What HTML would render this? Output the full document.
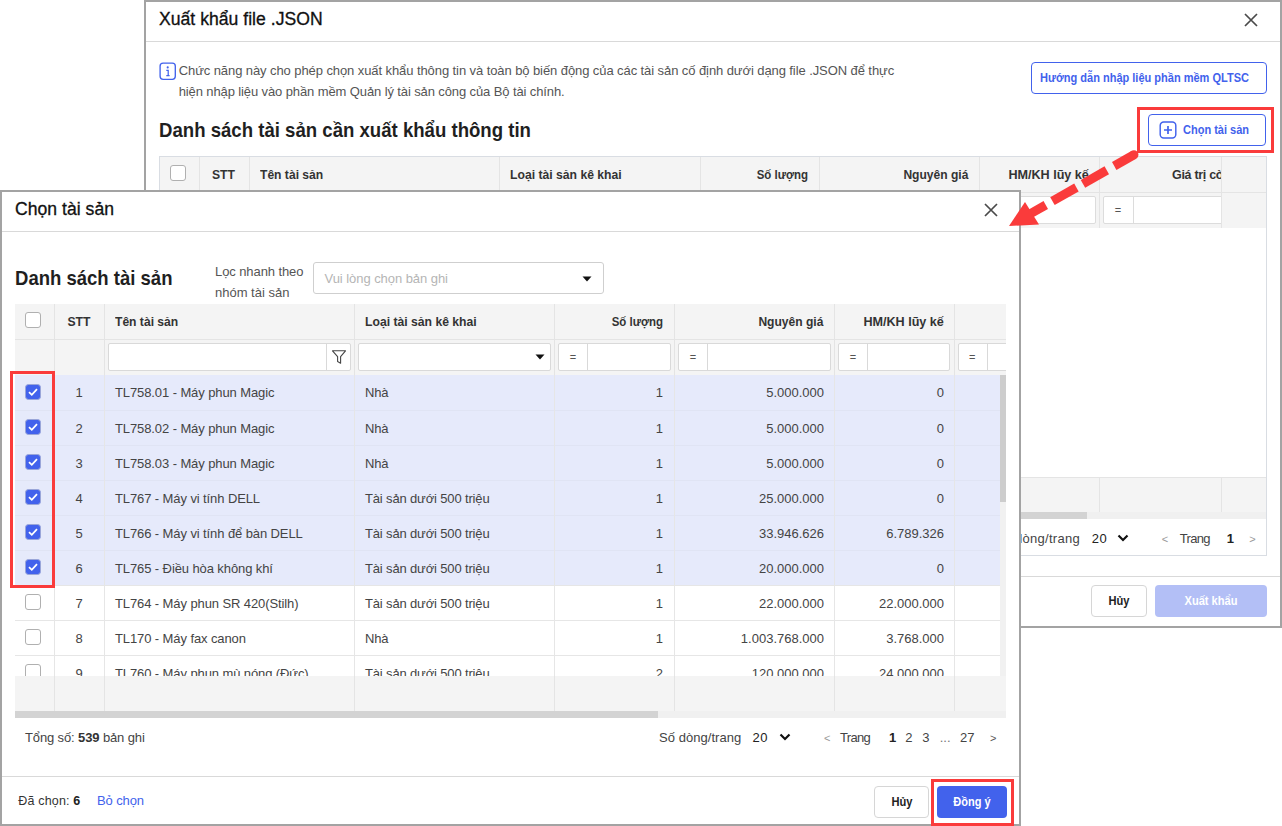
<!DOCTYPE html><html><head><meta charset="utf-8"><style>
html,body{margin:0;padding:0;background:#fff;}
body{width:1282px;height:826px;overflow:hidden;position:relative;font-family:"Liberation Sans",sans-serif;}
.b{position:absolute;}
.t{position:absolute;white-space:nowrap;line-height:20px;}
</style></head><body>
<div class='b' style='left:144px;top:0px;width:1138px;height:628px;box-sizing:border-box;border:2px solid #a3a3a3;background:#fff'></div>
<div class='t' style='letter-spacing:0.015px;left:159px;top:9px;font-size:17.6px;font-weight:400;color:#111;-webkit-text-stroke:0.3px #111;'>Xuất khẩu file .JSON</div>
<svg class='b' style='left:1244px;top:13px' width='14' height='14' viewBox='0 0 14 14'><path d='M1 1L13 13M13 1L1 13' stroke='#4a4a4a' stroke-width='1.7' fill='none'/></svg>
<div class='b' style='left:146px;top:41px;width:1134px;height:1px;background:#d9d9d9'></div>
<svg class='b' style='left:159px;top:62px' width='18' height='18' viewBox='0 0 18 18'><rect x='1.1' y='1.1' width='15.2' height='16.2' rx='3' fill='none' stroke='#4262ec' stroke-width='1.35'/><circle cx='8.7' cy='5.4' r='1.05' fill='#4262ec'/><path d='M7.3 8.3H9.2V13.6M7.3 13.6H10.6' stroke='#4262ec' stroke-width='1.25' fill='none'/></svg>
<div class='t' style='letter-spacing:-0.084px;left:178.7px;top:61px;font-size:13px;font-weight:400;color:#555;'>Chức năng này cho phép chọn xuất khẩu thông tin và toàn bộ biến động của các tài sản cố định dưới dạng file .JSON để thực</div>
<div class='t' style='letter-spacing:-0.110px;left:178.7px;top:82px;font-size:13px;font-weight:400;color:#555;'>hiện nhập liệu vào phần mềm Quản lý tài sản công của Bộ tài chính.</div>
<div class='b' style='left:1031px;top:62px;width:236px;height:32px;box-sizing:border-box;border:1px solid #4262ec;border-radius:4px'></div>
<div class='t' style='transform:scaleX(0.8812);transform-origin:left;left:1040px;top:68px;font-size:12.5px;font-weight:700;color:#4262ec;'>Hướng dẫn nhập liệu phần mềm QLTSC</div>
<div class='t' style='transform:scaleX(0.9071);transform-origin:left;left:159px;top:120px;font-size:20.5px;font-weight:700;color:#1f1f1f;'>Danh sách tài sản cần xuất khẩu thông tin</div>
<div class='b' style='left:1148px;top:114px;width:118px;height:32px;box-sizing:border-box;border:1px solid #4262ec;border-radius:4px'></div>
<svg class='b' style='left:1159px;top:121px' width='18' height='18' viewBox='0 0 18 18'><rect x='1.2' y='1' width='15.6' height='16' rx='3.5' fill='none' stroke='#4262ec' stroke-width='1.45'/><path d='M9 5V13M5 9H13' stroke='#4262ec' stroke-width='1.7'/></svg>
<div class='t' style='transform:scaleX(0.8798);transform-origin:left;left:1183px;top:120px;font-size:12.5px;font-weight:700;color:#4262ec;'>Chọn tài sản</div>
<div class='b' style='left:159px;top:156px;width:1108px;height:400px;box-sizing:border-box;border:1px solid #d9dde3;background:#fff'></div>
<div class='b' style='left:160px;top:157px;width:1106px;height:71px;background:#f4f4f4'></div>
<div class='b' style='left:160px;top:192px;width:1106px;height:1px;background:#e4e4e4'></div>
<div class='b' style='left:199px;top:157px;width:1px;height:71px;background:#e4e4e4'></div>
<div class='b' style='left:249px;top:157px;width:1px;height:71px;background:#e4e4e4'></div>
<div class='b' style='left:499px;top:157px;width:1px;height:71px;background:#e4e4e4'></div>
<div class='b' style='left:700px;top:157px;width:1px;height:71px;background:#e4e4e4'></div>
<div class='b' style='left:819px;top:157px;width:1px;height:71px;background:#e4e4e4'></div>
<div class='b' style='left:979px;top:157px;width:1px;height:71px;background:#e4e4e4'></div>
<div class='b' style='left:1099px;top:157px;width:1px;height:71px;background:#e4e4e4'></div>
<div class='b' style='left:1221px;top:157px;width:1px;height:71px;background:#e4e4e4'></div>
<div class='b' style='left:170px;top:165px;width:16px;height:16px;box-sizing:border-box;border:1px solid #b0b0b0;border-radius:3px;background:#fff'></div>
<div class='t' style='transform:scaleX(0.9742);transform-origin:left;left:212.4px;top:165px;font-size:12.5px;font-weight:700;color:#333;'>STT</div>
<div class='t' style='transform:scaleX(0.9679);transform-origin:left;left:260px;top:165px;font-size:12.5px;font-weight:700;color:#333;'>Tên tài sản</div>
<div class='t' style='transform:scaleX(0.9743);transform-origin:left;left:510px;top:165px;font-size:12.5px;font-weight:700;color:#333;'>Loại tài sản kê khai</div>
<div class='t' style='transform:scaleX(0.9173);transform-origin:right;right:474px;top:165px;font-size:12.5px;font-weight:700;color:#333;'>Số lượng</div>
<div class='t' style='transform:scaleX(0.9647);transform-origin:right;right:314px;top:165px;font-size:12.5px;font-weight:700;color:#333;'>Nguyên giá</div>
<div class='t' style='transform:scaleX(1.0076);transform-origin:right;right:193.4000000000001px;top:165px;font-size:12.5px;font-weight:700;color:#333;'>HM/KH lũy kế</div>
<div class='b' style='left:1100px;top:157px;width:121px;height:35px;overflow:hidden'><div class='t' style='left:72px;top:8px;font-size:12.5px;font-weight:700;color:#333;letter-spacing:-0.3px'>Giá trị còn lại</div></div>
<div class='b' style='left:1000px;top:196px;width:96px;height:28px;box-sizing:border-box;border:1px solid #dcdcdc;border-radius:2px;background:#fff'></div>
<div class='b' style='left:1103px;top:196px;width:140px;height:28px;box-sizing:border-box;border:1px solid #dcdcdc;border-radius:2px;background:#fff'></div>
<div class='b' style='left:1133px;top:197px;width:1px;height:26px;background:#dcdcdc'></div>
<div class='t' style='left:818px;width:600px;text-align:center;top:200px;font-size:11px;font-weight:400;color:#555;'>=</div>
<div class='b' style='left:1222px;top:193px;width:44px;height:35px;background:#f4f4f4'></div>
<div class='b' style='left:1221px;top:193px;width:1px;height:35px;background:#e4e4e4'></div>
<div class='b' style='left:160px;top:477px;width:1106px;height:35px;background:#f4f4f4'></div>
<div class='b' style='left:160px;top:477px;width:1106px;height:1px;background:#e4e4e4'></div>
<div class='b' style='left:1099px;top:477px;width:1px;height:35px;background:#e4e4e4'></div>
<div class='b' style='left:1221px;top:477px;width:1px;height:35px;background:#e4e4e4'></div>
<div class='b' style='left:160px;top:512px;width:1106px;height:7px;background:#f0f0f0'></div>
<div class='b' style='left:160px;top:512px;width:927px;height:7px;background:#d3d3d3'></div>
<div class='t' style='letter-spacing:0.276px;right:202px;top:529px;font-size:13px;font-weight:400;color:#444;'>Số dòng/trang</div>
<div class='t' style='letter-spacing:0.531px;left:1091.7px;top:529px;font-size:13px;font-weight:400;color:#222;'>20</div>
<svg class='b' style='left:1117px;top:534px' width='12' height='8' viewBox='0 0 12 8'><path d='M1.5 1.5L6 6L10.5 1.5' stroke='#111' stroke-width='2.2' fill='none'/></svg>
<div class='t' style='left:1161.7px;top:529px;font-size:11px;font-weight:400;color:#999;'>&lt;</div>
<div class='t' style='letter-spacing:-0.671px;left:1179.7px;top:529px;font-size:13px;font-weight:400;color:#444;'>Trang</div>
<div class='t' style='left:1226.8px;top:529px;font-size:13px;font-weight:700;color:#222;'>1</div>
<div class='t' style='left:1249.3px;top:529px;font-size:11px;font-weight:400;color:#999;'>&gt;</div>
<div class='b' style='left:146px;top:576px;width:1134px;height:1px;background:#d9d9d9'></div>
<div class='b' style='left:1091px;top:585px;width:56px;height:32px;box-sizing:border-box;border:1px solid #d6d6d6;border-radius:4px;background:#fff'></div>
<div class='t' style='transform:scaleX(0.8889);transform-origin:center;left:819px;width:600px;text-align:center;top:591px;font-size:12.5px;font-weight:700;color:#222;'>Hủy</div>
<div class='b' style='left:1155px;top:585px;width:112px;height:32px;background:#b3bff6;border-radius:4px'></div>
<div class='t' style='transform:scaleX(0.8870);transform-origin:center;left:911px;width:600px;text-align:center;top:591px;font-size:12.5px;font-weight:700;color:#fff;'>Xuất khẩu</div>
<div class='b' style='left:0px;top:190px;width:1021px;height:636px;box-sizing:border-box;border:2px solid #a3a3a3;background:#fff'></div>
<div class='t' style='letter-spacing:0.018px;left:15px;top:199px;font-size:17.6px;font-weight:400;color:#111;-webkit-text-stroke:0.3px #111;'>Chọn tài sản</div>
<svg class='b' style='left:984px;top:203px' width='14' height='14' viewBox='0 0 14 14'><path d='M1 1L13 13M13 1L1 13' stroke='#4a4a4a' stroke-width='1.7' fill='none'/></svg>
<div class='b' style='left:2px;top:231px;width:1017px;height:1px;background:#d9d9d9'></div>
<div class='t' style='transform:scaleX(0.9035);transform-origin:left;left:15px;top:268px;font-size:20.5px;font-weight:700;color:#1f1f1f;'>Danh sách tài sản</div>
<div class='t' style='letter-spacing:-0.088px;left:215px;top:262px;font-size:13px;font-weight:400;color:#555;'>Lọc nhanh theo</div>
<div class='t' style='letter-spacing:-0.003px;left:215px;top:283px;font-size:13px;font-weight:400;color:#555;'>nhóm tài sản</div>
<div class='b' style='left:313px;top:262px;width:291px;height:32px;box-sizing:border-box;border:1px solid #cfcfcf;border-radius:3px;background:#fff'></div>
<div class='t' style='letter-spacing:-0.053px;left:324.5px;top:269px;font-size:13px;font-weight:400;color:#b5b5b5;'>Vui lòng chọn bản ghi</div>
<svg class='b' style='left:582px;top:276px' width='10' height='6' viewBox='0 0 10 6'><path d='M0.5 0.5H9.5L5 5.5Z' fill='#111'/></svg>
<div class='b' style='left:15px;top:304px;width:991px;height:71px;background:#f4f4f4'></div>
<div class='b' style='left:15px;top:339px;width:991px;height:1px;background:#e4e4e4'></div>
<div class='b' style='left:54px;top:304px;width:1px;height:71px;background:#e4e4e4'></div>
<div class='b' style='left:104px;top:304px;width:1px;height:71px;background:#e4e4e4'></div>
<div class='b' style='left:354px;top:304px;width:1px;height:71px;background:#e4e4e4'></div>
<div class='b' style='left:554px;top:304px;width:1px;height:71px;background:#e4e4e4'></div>
<div class='b' style='left:674px;top:304px;width:1px;height:71px;background:#e4e4e4'></div>
<div class='b' style='left:834px;top:304px;width:1px;height:71px;background:#e4e4e4'></div>
<div class='b' style='left:954px;top:304px;width:1px;height:71px;background:#e4e4e4'></div>
<div class='b' style='left:25px;top:312px;width:16px;height:16px;box-sizing:border-box;border:1px solid #b0b0b0;border-radius:3px;background:#fff'></div>
<div class='t' style='transform:scaleX(0.9742);transform-origin:center;left:-221px;width:600px;text-align:center;top:312px;font-size:12.5px;font-weight:700;color:#333;'>STT</div>
<div class='t' style='transform:scaleX(0.9679);transform-origin:left;left:115px;top:312px;font-size:12.5px;font-weight:700;color:#333;'>Tên tài sản</div>
<div class='t' style='transform:scaleX(0.9743);transform-origin:left;left:364.6px;top:312px;font-size:12.5px;font-weight:700;color:#333;'>Loại tài sản kê khai</div>
<div class='t' style='transform:scaleX(0.9173);transform-origin:right;right:619px;top:312px;font-size:12.5px;font-weight:700;color:#333;'>Số lượng</div>
<div class='t' style='transform:scaleX(0.9647);transform-origin:right;right:459px;top:312px;font-size:12.5px;font-weight:700;color:#333;'>Nguyên giá</div>
<div class='t' style='transform:scaleX(1.0076);transform-origin:right;right:338.4px;top:312px;font-size:12.5px;font-weight:700;color:#333;'>HM/KH lũy kế</div>
<div class='b' style='left:108px;top:343px;width:243px;height:28px;box-sizing:border-box;border:1px solid #d9d9d9;border-radius:2px;background:#fff'></div>
<div class='b' style='left:326px;top:344px;width:1px;height:26px;background:#d9d9d9'></div>
<svg class='b' style='left:331px;top:349px' width='16' height='16' viewBox='0 0 16 16'><path d='M1.5 1.8H14.5L9.6 7.6V14.2L6.6 12.6V7.6Z' fill='none' stroke='#444' stroke-width='1.1' stroke-linejoin='round'/></svg>
<div class='b' style='left:358px;top:343px;width:193px;height:28px;box-sizing:border-box;border:1px solid #d9d9d9;border-radius:2px;background:#fff'></div>
<svg class='b' style='left:535px;top:354px' width='10' height='6' viewBox='0 0 10 6'><path d='M0.5 0.5H9.5L5 5.5Z' fill='#111'/></svg>
<div class='b' style='left:558px;top:343px;width:113px;height:28px;box-sizing:border-box;border:1px solid #d9d9d9;border-radius:2px;background:#fff'></div>
<div class='b' style='left:587px;top:344px;width:1px;height:26px;background:#d9d9d9'></div>
<div class='t' style='left:273px;width:600px;text-align:center;top:347px;font-size:11px;font-weight:400;color:#555;'>=</div>
<div class='b' style='left:678px;top:343px;width:153px;height:28px;box-sizing:border-box;border:1px solid #d9d9d9;border-radius:2px;background:#fff'></div>
<div class='b' style='left:707px;top:344px;width:1px;height:26px;background:#d9d9d9'></div>
<div class='t' style='left:393px;width:600px;text-align:center;top:347px;font-size:11px;font-weight:400;color:#555;'>=</div>
<div class='b' style='left:838px;top:343px;width:112px;height:28px;box-sizing:border-box;border:1px solid #d9d9d9;border-radius:2px;background:#fff'></div>
<div class='b' style='left:867px;top:344px;width:1px;height:26px;background:#d9d9d9'></div>
<div class='t' style='left:553px;width:600px;text-align:center;top:347px;font-size:11px;font-weight:400;color:#555;'>=</div>
<div class='b' style='left:955px;top:339px;width:51px;height:36px;overflow:hidden'><div class='b' style='left:3px;top:4px;width:90px;height:28px;box-sizing:border-box;border:1px solid #d9d9d9;border-radius:2px;background:#fff'></div><div class='b' style='left:32px;top:5px;width:1px;height:26px;background:#d9d9d9'></div><div class='t' style='left:14px;top:8px;font-size:11px;color:#555'>=</div></div>
<div class='b' style='left:15px;top:375px;width:985px;height:301px;overflow:hidden'>
<div class='b' style='left:0;top:0;width:985px;height:210px;background:#e6eafb'></div>
<div class='b' style='left:0;top:35px;width:985px;height:1px;background:#e0e4f4'></div>
<div class='b' style='left:0;top:70px;width:985px;height:1px;background:#e0e4f4'></div>
<div class='b' style='left:0;top:105px;width:985px;height:1px;background:#e0e4f4'></div>
<div class='b' style='left:0;top:140px;width:985px;height:1px;background:#e0e4f4'></div>
<div class='b' style='left:0;top:175px;width:985px;height:1px;background:#e0e4f4'></div>
<div class='b' style='left:0;top:210px;width:985px;height:1px;background:#e6e6e6'></div>
<div class='b' style='left:0;top:245px;width:985px;height:1px;background:#e6e6e6'></div>
<div class='b' style='left:0;top:280px;width:985px;height:1px;background:#e6e6e6'></div>
<div class='b' style='left:0;top:315px;width:985px;height:1px;background:#e6e6e6'></div>
<div class='b' style='left:39px;top:0;width:1px;height:301px;background:#e6e6e6'></div>
<div class='b' style='left:89px;top:0;width:1px;height:301px;background:#e6e6e6'></div>
<div class='b' style='left:339px;top:0;width:1px;height:301px;background:#e6e6e6'></div>
<div class='b' style='left:539px;top:0;width:1px;height:301px;background:#e6e6e6'></div>
<div class='b' style='left:659px;top:0;width:1px;height:301px;background:#e6e6e6'></div>
<div class='b' style='left:819px;top:0;width:1px;height:301px;background:#e6e6e6'></div>
<div class='b' style='left:939px;top:0;width:1px;height:301px;background:#e6e6e6'></div>
<svg class='b' style='left:10px;top:9px' width='16' height='16' viewBox='0 0 16 16'><rect x='0.5' y='0.5' width='15' height='15' rx='3' fill='#4262ec' stroke='#9aa6d8' stroke-width='1'/><path d='M4 8.2L6.8 10.8L12 5.2' stroke='#fff' stroke-width='1.8' fill='none'/></svg>
<div class='t' style='left:-236px;width:600px;text-align:center;top:8px;font-size:13px;color:#444'>1</div>
<div class='t' style='left:100px;top:8px;font-size:13px;color:#444;letter-spacing:-0.1px'>TL758.01 - Máy phun Magic</div>
<div class='t' style='left:350px;top:8px;font-size:13px;color:#444;letter-spacing:-0.15px'>Nhà</div>
<div class='t' style='right:337px;top:8px;font-size:13px;color:#444'>1</div>
<div class='t' style='right:176px;top:8px;font-size:13px;color:#444'>5.000.000</div>
<div class='t' style='right:56px;top:8px;font-size:13px;color:#444'>0</div>
<svg class='b' style='left:10px;top:44px' width='16' height='16' viewBox='0 0 16 16'><rect x='0.5' y='0.5' width='15' height='15' rx='3' fill='#4262ec' stroke='#9aa6d8' stroke-width='1'/><path d='M4 8.2L6.8 10.8L12 5.2' stroke='#fff' stroke-width='1.8' fill='none'/></svg>
<div class='t' style='left:-236px;width:600px;text-align:center;top:44px;font-size:13px;color:#444'>2</div>
<div class='t' style='left:100px;top:44px;font-size:13px;color:#444;letter-spacing:-0.1px'>TL758.02 - Máy phun Magic</div>
<div class='t' style='left:350px;top:44px;font-size:13px;color:#444;letter-spacing:-0.15px'>Nhà</div>
<div class='t' style='right:337px;top:44px;font-size:13px;color:#444'>1</div>
<div class='t' style='right:176px;top:44px;font-size:13px;color:#444'>5.000.000</div>
<div class='t' style='right:56px;top:44px;font-size:13px;color:#444'>0</div>
<svg class='b' style='left:10px;top:79px' width='16' height='16' viewBox='0 0 16 16'><rect x='0.5' y='0.5' width='15' height='15' rx='3' fill='#4262ec' stroke='#9aa6d8' stroke-width='1'/><path d='M4 8.2L6.8 10.8L12 5.2' stroke='#fff' stroke-width='1.8' fill='none'/></svg>
<div class='t' style='left:-236px;width:600px;text-align:center;top:79px;font-size:13px;color:#444'>3</div>
<div class='t' style='left:100px;top:79px;font-size:13px;color:#444;letter-spacing:-0.1px'>TL758.03 - Máy phun Magic</div>
<div class='t' style='left:350px;top:79px;font-size:13px;color:#444;letter-spacing:-0.15px'>Nhà</div>
<div class='t' style='right:337px;top:79px;font-size:13px;color:#444'>1</div>
<div class='t' style='right:176px;top:79px;font-size:13px;color:#444'>5.000.000</div>
<div class='t' style='right:56px;top:79px;font-size:13px;color:#444'>0</div>
<svg class='b' style='left:10px;top:114px' width='16' height='16' viewBox='0 0 16 16'><rect x='0.5' y='0.5' width='15' height='15' rx='3' fill='#4262ec' stroke='#9aa6d8' stroke-width='1'/><path d='M4 8.2L6.8 10.8L12 5.2' stroke='#fff' stroke-width='1.8' fill='none'/></svg>
<div class='t' style='left:-236px;width:600px;text-align:center;top:114px;font-size:13px;color:#444'>4</div>
<div class='t' style='left:100px;top:114px;font-size:13px;color:#444;letter-spacing:-0.1px'>TL767 - Máy vi tính DELL</div>
<div class='t' style='left:350px;top:114px;font-size:13px;color:#444;letter-spacing:-0.15px'>Tài sản dưới 500 triệu</div>
<div class='t' style='right:337px;top:114px;font-size:13px;color:#444'>1</div>
<div class='t' style='right:176px;top:114px;font-size:13px;color:#444'>25.000.000</div>
<div class='t' style='right:56px;top:114px;font-size:13px;color:#444'>0</div>
<svg class='b' style='left:10px;top:149px' width='16' height='16' viewBox='0 0 16 16'><rect x='0.5' y='0.5' width='15' height='15' rx='3' fill='#4262ec' stroke='#9aa6d8' stroke-width='1'/><path d='M4 8.2L6.8 10.8L12 5.2' stroke='#fff' stroke-width='1.8' fill='none'/></svg>
<div class='t' style='left:-236px;width:600px;text-align:center;top:149px;font-size:13px;color:#444'>5</div>
<div class='t' style='left:100px;top:149px;font-size:13px;color:#444;letter-spacing:-0.1px'>TL766 - Máy vi tính để bàn DELL</div>
<div class='t' style='left:350px;top:149px;font-size:13px;color:#444;letter-spacing:-0.15px'>Tài sản dưới 500 triệu</div>
<div class='t' style='right:337px;top:149px;font-size:13px;color:#444'>1</div>
<div class='t' style='right:176px;top:149px;font-size:13px;color:#444'>33.946.626</div>
<div class='t' style='right:56px;top:149px;font-size:13px;color:#444'>6.789.326</div>
<svg class='b' style='left:10px;top:184px' width='16' height='16' viewBox='0 0 16 16'><rect x='0.5' y='0.5' width='15' height='15' rx='3' fill='#4262ec' stroke='#9aa6d8' stroke-width='1'/><path d='M4 8.2L6.8 10.8L12 5.2' stroke='#fff' stroke-width='1.8' fill='none'/></svg>
<div class='t' style='left:-236px;width:600px;text-align:center;top:184px;font-size:13px;color:#444'>6</div>
<div class='t' style='left:100px;top:184px;font-size:13px;color:#444;letter-spacing:-0.1px'>TL765 - Điều hòa không khí</div>
<div class='t' style='left:350px;top:184px;font-size:13px;color:#444;letter-spacing:-0.15px'>Tài sản dưới 500 triệu</div>
<div class='t' style='right:337px;top:184px;font-size:13px;color:#444'>1</div>
<div class='t' style='right:176px;top:184px;font-size:13px;color:#444'>20.000.000</div>
<div class='t' style='right:56px;top:184px;font-size:13px;color:#444'>0</div>
<div class='b' style='left:10px;top:219px;width:16px;height:16px;box-sizing:border-box;border:1px solid #b0b0b0;border-radius:3px;background:#fff'></div>
<div class='t' style='left:-236px;width:600px;text-align:center;top:219px;font-size:13px;color:#444'>7</div>
<div class='t' style='left:100px;top:219px;font-size:13px;color:#444;letter-spacing:-0.1px'>TL764 - Máy phun SR 420(Stilh)</div>
<div class='t' style='left:350px;top:219px;font-size:13px;color:#444;letter-spacing:-0.15px'>Tài sản dưới 500 triệu</div>
<div class='t' style='right:337px;top:219px;font-size:13px;color:#444'>1</div>
<div class='t' style='right:176px;top:219px;font-size:13px;color:#444'>22.000.000</div>
<div class='t' style='right:56px;top:219px;font-size:13px;color:#444'>22.000.000</div>
<div class='b' style='left:10px;top:254px;width:16px;height:16px;box-sizing:border-box;border:1px solid #b0b0b0;border-radius:3px;background:#fff'></div>
<div class='t' style='left:-236px;width:600px;text-align:center;top:254px;font-size:13px;color:#444'>8</div>
<div class='t' style='left:100px;top:254px;font-size:13px;color:#444;letter-spacing:-0.1px'>TL170 - Máy fax canon</div>
<div class='t' style='left:350px;top:254px;font-size:13px;color:#444;letter-spacing:-0.15px'>Nhà</div>
<div class='t' style='right:337px;top:254px;font-size:13px;color:#444'>1</div>
<div class='t' style='right:176px;top:254px;font-size:13px;color:#444'>1.003.768.000</div>
<div class='t' style='right:56px;top:254px;font-size:13px;color:#444'>3.768.000</div>
<div class='b' style='left:10px;top:289px;width:16px;height:16px;box-sizing:border-box;border:1px solid #b0b0b0;border-radius:3px;background:#fff'></div>
<div class='t' style='left:-236px;width:600px;text-align:center;top:289px;font-size:13px;color:#444'>9</div>
<div class='t' style='left:100px;top:289px;font-size:13px;color:#444;letter-spacing:-0.1px'>TL760 - Máy phun mù nóng (Đức)</div>
<div class='t' style='left:350px;top:289px;font-size:13px;color:#444;letter-spacing:-0.15px'>Tài sản dưới 500 triệu</div>
<div class='t' style='right:337px;top:289px;font-size:13px;color:#444'>2</div>
<div class='t' style='right:176px;top:289px;font-size:13px;color:#444'>120.000.000</div>
<div class='t' style='right:56px;top:289px;font-size:13px;color:#444'>24.000.000</div>
</div>
<div class='b' style='left:1000px;top:375px;width:6px;height:301px;background:#f1f1f1'></div>
<div class='b' style='left:1000px;top:375px;width:6px;height:127px;background:#cdcdcd'></div>
<div class='b' style='left:15px;top:676px;width:991px;height:35px;background:#f4f4f4'></div>
<div class='b' style='left:54px;top:676px;width:1px;height:35px;background:#e4e4e4'></div>
<div class='b' style='left:104px;top:676px;width:1px;height:35px;background:#e4e4e4'></div>
<div class='b' style='left:354px;top:676px;width:1px;height:35px;background:#e4e4e4'></div>
<div class='b' style='left:554px;top:676px;width:1px;height:35px;background:#e4e4e4'></div>
<div class='b' style='left:674px;top:676px;width:1px;height:35px;background:#e4e4e4'></div>
<div class='b' style='left:834px;top:676px;width:1px;height:35px;background:#e4e4e4'></div>
<div class='b' style='left:954px;top:676px;width:1px;height:35px;background:#e4e4e4'></div>
<div class='b' style='left:15px;top:711px;width:991px;height:7px;background:#f0f0f0'></div>
<div class='b' style='left:15px;top:711px;width:643px;height:7px;background:#d3d3d3'></div>
<div class='t' style='letter-spacing:-0.125px;left:25px;top:728px;font-size:13px;font-weight:400;color:#444;'>Tổng số: <b style='color:#333'>539</b> bản ghi</div>
<div class='t' style='letter-spacing:0.051px;left:659px;top:728px;font-size:13px;font-weight:400;color:#444;'>Số dòng/trang</div>
<div class='t' style='letter-spacing:0.531px;left:752.6px;top:728px;font-size:13px;font-weight:400;color:#222;'>20</div>
<svg class='b' style='left:779px;top:733px' width='12' height='8' viewBox='0 0 12 8'><path d='M1.5 1.5L6 6L10.5 1.5' stroke='#111' stroke-width='2.2' fill='none'/></svg>
<div class='t' style='left:824px;top:728px;font-size:11px;font-weight:400;color:#999;'>&lt;</div>
<div class='t' style='letter-spacing:-0.671px;left:840px;top:728px;font-size:13px;font-weight:400;color:#444;'>Trang</div>
<div class='t' style='left:889px;top:728px;font-size:13px;font-weight:700;color:#222;'>1</div>
<div class='t' style='left:905.3px;top:728px;font-size:13px;font-weight:400;color:#444;'>2</div>
<div class='t' style='left:922.3px;top:728px;font-size:13px;font-weight:400;color:#444;'>3</div>
<div class='t' style='left:939.7px;top:728px;font-size:13px;font-weight:400;color:#777;'>...</div>
<div class='t' style='left:960px;top:728px;font-size:13px;font-weight:400;color:#444;'>27</div>
<div class='t' style='left:990px;top:728px;font-size:11px;font-weight:400;color:#555;'>&gt;</div>
<div class='b' style='left:2px;top:776px;width:1017px;height:1px;background:#d9d9d9'></div>
<div class='t' style='letter-spacing:0.170px;left:18.3px;top:791px;font-size:12.5px;font-weight:400;color:#333;'>Đã chọn: <b style='color:#222'>6</b></div>
<div class='t' style='letter-spacing:-0.117px;left:97px;top:791px;font-size:13px;font-weight:400;color:#4262ec;'>Bỏ chọn</div>
<div class='b' style='left:874px;top:786px;width:55px;height:32px;box-sizing:border-box;border:1px solid #d6d6d6;border-radius:4px;background:#fff'></div>
<div class='t' style='transform:scaleX(0.8889);transform-origin:center;left:601.5px;width:600px;text-align:center;top:792px;font-size:12.5px;font-weight:700;color:#222;'>Hủy</div>
<div class='b' style='left:937px;top:786px;width:70px;height:32px;background:#4262ec;border-radius:4px'></div>
<div class='t' style='transform:scaleX(0.8806);transform-origin:center;left:672px;width:600px;text-align:center;top:792px;font-size:12.5px;font-weight:700;color:#fff;'>Đồng ý</div>
<div class='b' style='left:10px;top:371px;width:45px;height:217px;box-sizing:border-box;border:3px solid #fa3b3b'></div>
<div class='b' style='left:1137px;top:107px;width:137px;height:46px;box-sizing:border-box;border:3px solid #fa3b3b'></div>
<div class='b' style='left:931px;top:779px;width:83px;height:47px;box-sizing:border-box;border:3px solid #fa3b3b'></div>
<svg class='b' style='left:0;top:0' width='1282' height='826' viewBox='0 0 1282 826'><line x1='1133.96' y1='154.73' x2='1114.23' y2='165.97' stroke='#fa3b3b' stroke-width='9'/><line x1='1106.76' y1='170.23' x2='1082.95' y2='183.79' stroke='#fa3b3b' stroke-width='9'/><line x1='1076.43' y1='187.50' x2='1052.45' y2='201.16' stroke='#fa3b3b' stroke-width='9'/><line x1='1045.76' y1='204.97' x2='1029.24' y2='214.38' stroke='#fa3b3b' stroke-width='9'/><circle cx='1133.96' cy='154.73' r='4.5' fill='#fa3b3b'/><polygon points='1009,226 1025,202 1039,224.5' fill='#fa3b3b'/></svg>
</body></html>
